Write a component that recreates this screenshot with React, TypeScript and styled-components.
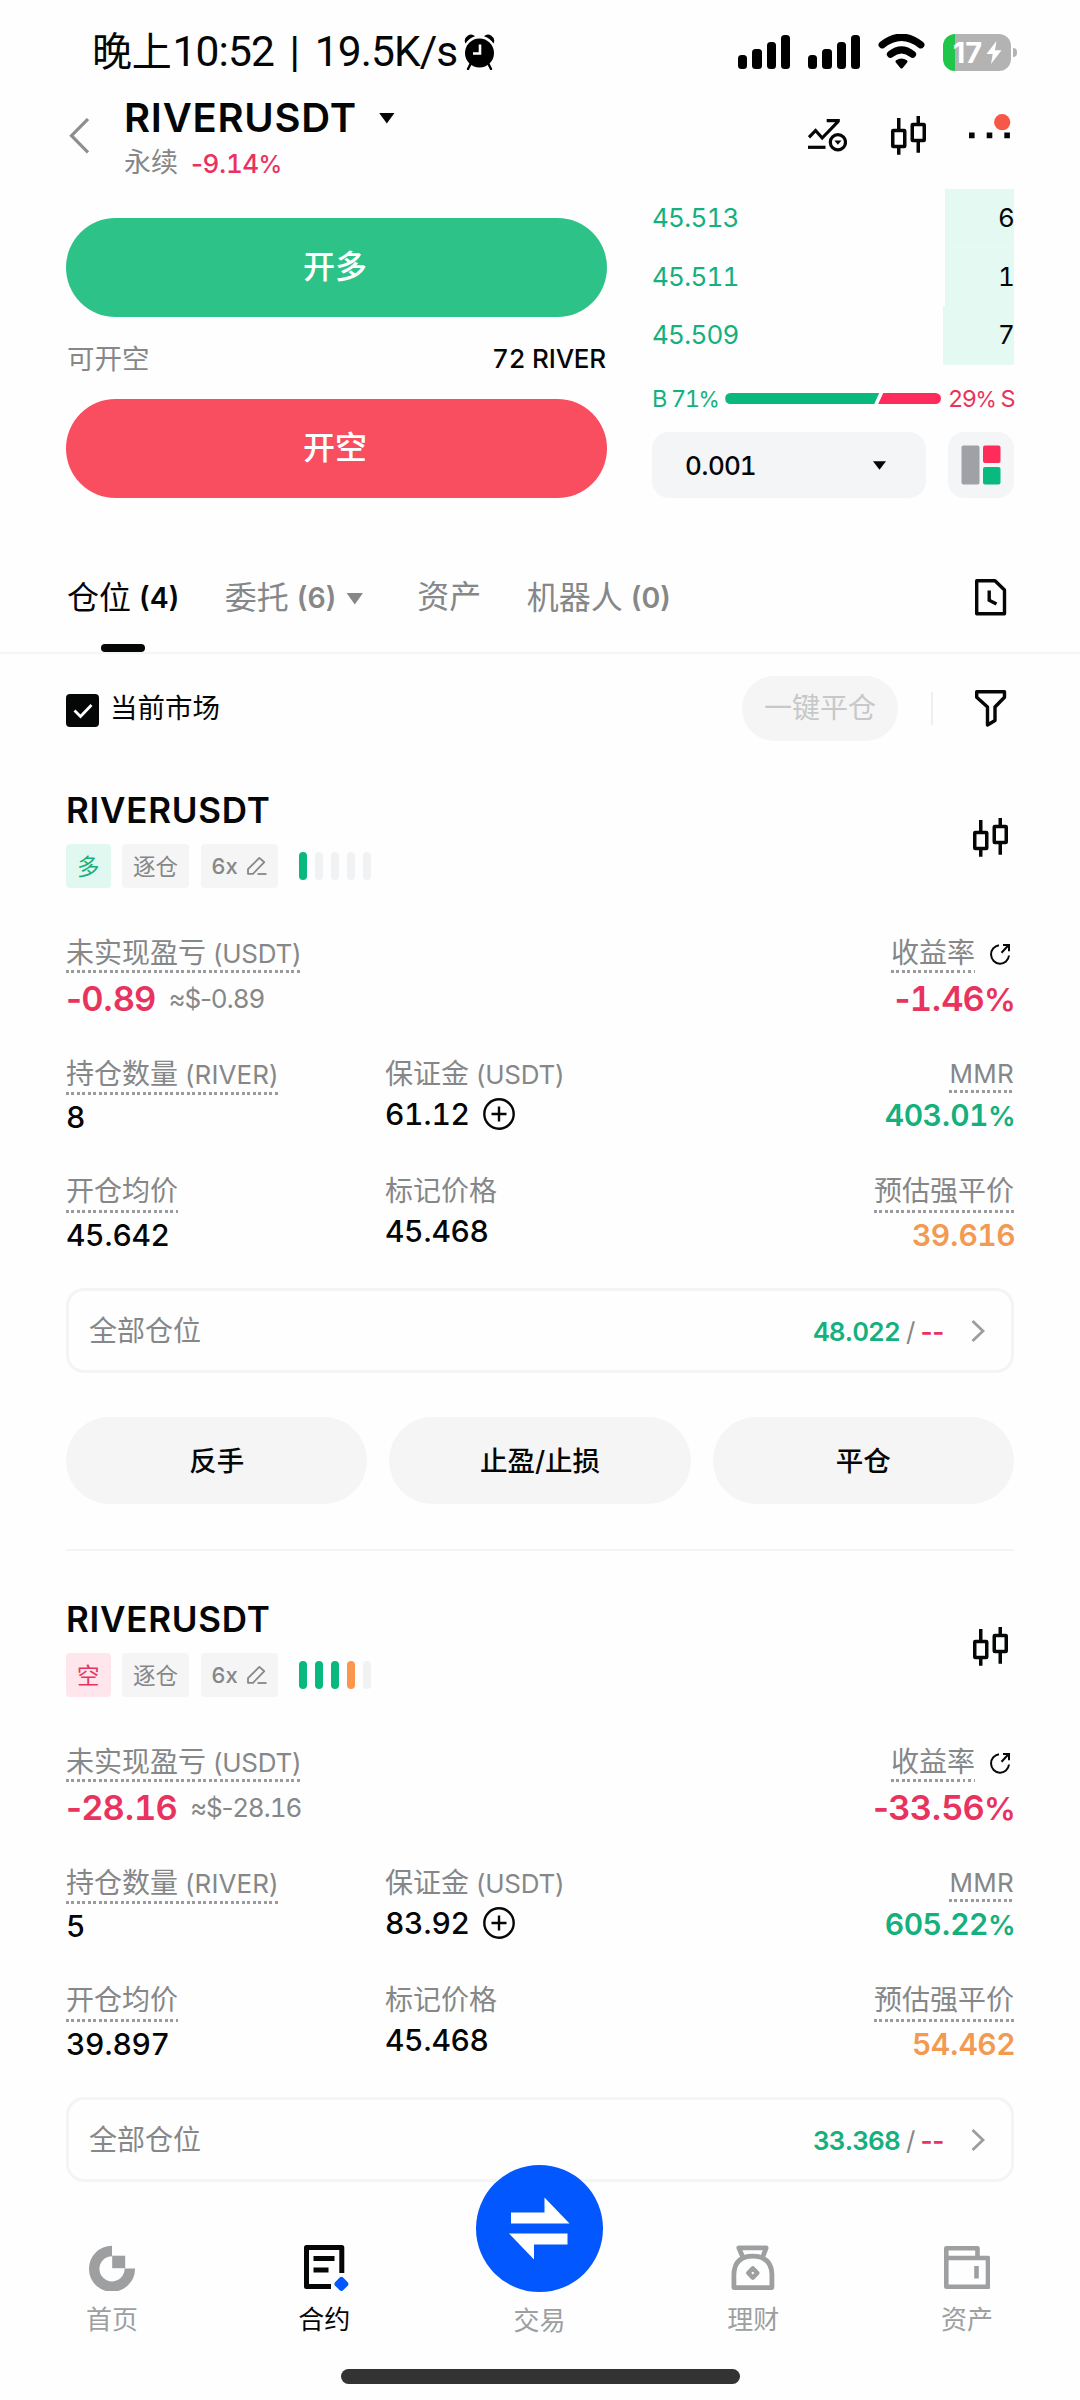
import React from "react";
import styled, { createGlobalStyle } from "styled-components";

const color = {
  ink: "#050606",
  grey: "#858788",
  soft: "#9d9fa0",
  green: "#14b07d",
  red: "#e9335f",
  orange: "#f39a52",
  fill: "#f5f5f5",
  line: "#f2f3f3",
};

const GlobalStyle = createGlobalStyle`
  * { box-sizing: border-box; }
  body {
    margin: 0;
    background: #fefefe;
    color: ${color.ink};
    font-family: Inter, "Noto Sans CJK SC", sans-serif;
  }
  svg { display: block; flex: none; }
  button { font: inherit; color: inherit; border: 0; padding: 0; }
`;

const Screen = styled.div`
  width: 1080px;
  height: 2400px;
  display: flex;
  flex-direction: column;
  overflow: hidden;
  background: #fefefe;
`;

/* ---------- text helpers ---------- */

const Digits = styled.span`
  font-variant-numeric: tabular-nums;
`;

const Percent = styled.span`
  font-size: 0.92em;
`;

function Num({ children }: { children: string }) {
  return (
    <>
      {children.split(/(\d+|%)/).map((part, i) => {
        if (part === "%") return <Percent key={i}>%</Percent>;
        return /\d/.test(part) ? <Digits key={i}>{part}</Digits> : part;
      })}
    </>
  );
}

/* ---------- status bar ---------- */

const StatusBar = styled.div`
  display: flex;
  align-items: center;
  height: 94px;
  padding: 10px 63px 0 92px;
`;

const Clock = styled.div`
  font-family: Roboto, "Noto Sans CJK SC", sans-serif;
  font-size: 42.500px;
  line-height: 48px;
  font-weight: 450;
  letter-spacing: -0.900px;
  word-spacing: 6px;
  white-space: pre;
`;

const ClockPeriod = styled.span`
  font-size: 40px;
  font-weight: 400;
  letter-spacing: -0.200px;
  margin-right: 1px;
`;

const AlarmSlot = styled.div`
  margin-left: 7px;
`;

const StatusIcons = styled.div`
  display: flex;
  align-items: center;
  margin-left: auto;
`;

const Signal = styled.div`
  display: flex;
  align-items: flex-end;
  gap: 5px;
  height: 34px;
  margin-right: 18px;
`;

const SignalBar = styled.i<{ $h: number }>`
  width: 9.250px;
  height: ${(p) => p.$h}px;
  border-radius: 3.500px;
  background: #000;
`;

const Battery = styled.div`
  display: flex;
  align-items: center;
  justify-content: center;
  gap: 4px;
  width: 68px;
  height: 37px;
  margin-left: 18px;
  padding-left: 1px;
  border-radius: 12px;
  background: linear-gradient(90deg, #1fc64a 12.5px, #b3b3b3 12.5px);
  color: #fff;
  font-size: 29px;
  line-height: 37px;
  font-weight: 700;
`;

const BatteryCap = styled.i`
  width: 4px;
  height: 9px;
  margin-left: 2px;
  border-radius: 0 4px 4px 0;
  background: #b3b3b3;
`;

const SIGNAL = [14, 20.5, 27, 34];

function SignalIcon() {
  return (
    <Signal>
      {SIGNAL.map((h) => (
        <SignalBar key={h} $h={h} />
      ))}
    </Signal>
  );
}

function AlarmIcon() {
  return (
    <svg width="31" height="36" viewBox="0 0 31 36">
      <path d="M1 8.500A6.200 6.200 0 0 1 11 2.200Q4.500 4.500 1.500 9.500ZM30 8.500A6.200 6.200 0 0 0 20 2.200Q26.500 4.500 29.500 9.500Z" fill="#000" />
      <path d="M6.500 30 4 35M24.500 30 27 35" stroke="#000" strokeWidth="2.400" strokeLinecap="round" />
      <circle cx="15.500" cy="19" r="14.500" fill="#000" />
      <path d="M16 10.500V19.500H9" fill="none" stroke="#fff" strokeWidth="2.600" />
    </svg>
  );
}

function WifiIcon() {
  return (
    <svg width="47" height="36" viewBox="0 0 47 36" fill="none" stroke="#000" strokeLinecap="round">
      <path d="M4.200 10.800Q23.500-4.300 42.800 10.800" strokeWidth="7.200" />
      <path d="M12.500 20.300Q23.500 11.500 34.500 20.300" strokeWidth="7.200" />
      <path d="M19 27.500Q23.500 24.500 28 27.500L23.500 33Z" fill="#000" strokeWidth="3" strokeLinejoin="round" />
    </svg>
  );
}

/* ---------- header ---------- */

const Header = styled.header`
  display: flex;
  align-items: flex-start;
  height: 95px;
  padding: 0 69px;
`;

const BackSlot = styled.div`
  width: 55px;
  padding-top: 24px;
`;

const TitleLine = styled.div`
  display: flex;
  align-items: center;
  gap: 22px;
  font-size: 40px;
  line-height: 48px;
  font-weight: 600;
  letter-spacing: 0.750px;
`;

const SubLine = styled.div`
  display: flex;
  gap: 13px;
  margin-top: 1px;
  font-size: 27px;
  line-height: 40px;
  color: ${color.grey};
`;

const Change = styled.span`
  padding-top: 1px;
  font-size: 26px;
  font-weight: 500;
  letter-spacing: -0.600px;
  color: ${color.red};
`;

const HeaderTools = styled.div`
  display: flex;
  margin-left: auto;
  padding-top: 22px;
  gap: 43.500px;
`;

const Caret = styled.i<{ $w: number; $h: number; $c?: string }>`
  width: ${(p) => p.$w}px;
  height: ${(p) => p.$h}px;
  background: ${(p) => p.$c ?? color.ink};
  clip-path: polygon(0 0, 100% 0, 50% 100%);
`;

function CandleIcon() {
  return (
    <svg width="35" height="39" viewBox="0 0 35 39" fill="none" stroke={color.ink} strokeWidth="3.500">
      <rect x="1.750" y="14.400" width="12" height="16.200" rx="0.600" />
      <path d="M7.750 2V14M7.750 31V38.700" />
      <rect x="21.250" y="8.400" width="12" height="16.200" rx="0.600" />
      <path d="M27.250 0V8M27.250 25V36.700" />
    </svg>
  );
}

function TrendIcon() {
  return (
    <svg width="39" height="39" viewBox="0 -3 39 39" fill="none" stroke={color.ink} strokeWidth="3.200">
      <path d="M1 18.300 7.600 11.500 14.200 19 30 2.600M18.700 1.700H31.800" />
      <path d="M0 28.300H17.500" />
      <circle cx="29.900" cy="23.300" r="7.600" />
      <path d="M26.300 21.500H33.500L29.900 25.800Z" fill={color.ink} stroke="none" />
    </svg>
  );
}

function MoreIcon() {
  return (
    <svg width="42" height="26" viewBox="0 2 42 26" overflow="visible" fill={color.ink}>
      <path d="M0 18.500h5.600v5.700H0zM17.700 18.500h5.600v5.700h-5.600zM35.300 18.500h5.600v5.700h-5.600z" />
      <circle cx="33.200" cy="8.200" r="8.100" fill="#f75747" />
    </svg>
  );
}

/* ---------- order entry ---------- */

const Trade = styled.section`
  display: grid;
  grid-template-columns: 541px 362px;
  column-gap: 45px;
  padding: 0 66px;
  height: 309px;
`;

const OrderForm = styled.div`
  display: flex;
  flex-direction: column;
  padding-top: 29px;
`;

const OrderButton = styled.button<{ $bg: string }>`
  height: 99px;
  padding: 0 3px 1px 0;
  border-radius: 50px;
  background: ${(p) => p.$bg};
  color: #fff;
  font-size: 32px;
  line-height: 40px;
  font-weight: 500;
`;

const Available = styled.div`
  display: flex;
  justify-content: space-between;
  height: 82px;
  padding: 0 1px;
  line-height: 84px;
  font-size: 27.500px;
  color: ${color.grey};
`;

const AvailableValue = styled.span`
  font-size: 26px;
  font-weight: 480;
  letter-spacing: -0.200px;
  color: ${color.ink};
`;

const Book = styled.div`
  display: flex;
  flex-direction: column;
`;

const BookRow = styled.div<{ $depth: number }>`
  display: flex;
  justify-content: space-between;
  height: 58.660px;
  line-height: 58px;
  font-size: 26px;
  letter-spacing: -0.900px;
  background: linear-gradient(#e3f9f1, #e3f9f1) right / ${(p) => p.$depth}px 100% no-repeat;
`;

const BookPrice = styled.span`
  color: ${color.green};
`;

const Ratio = styled.div`
  display: flex;
  align-items: center;
  gap: 7px;
  height: 67px;
  font-size: 23.500px;
  letter-spacing: -1.500px;
  white-space: nowrap;
`;

const RatioText = styled.span<{ $c: string }>`
  color: ${(p) => p.$c};
`;

const RatioTrack = styled.div`
  flex: 1;
  display: flex;
  height: 11px;
`;

const BuyBar = styled.i`
  flex: 71;
  border-radius: 6px 0 0 6px;
  background: #09b87e;
  clip-path: polygon(0 0, 100% 0, calc(100% - 5px) 100%, 0 100%);
`;

const SellBar = styled.i`
  flex: 29;
  margin-left: -1px;
  border-radius: 0 6px 6px 0;
  background: #fd2c5c;
  clip-path: polygon(5px 0, 100% 0, 100% 100%, 0 100%);
`;

const BookControls = styled.div`
  display: flex;
  justify-content: space-between;
  height: 66px;
`;

const StepSelect = styled.div`
  display: flex;
  align-items: center;
  justify-content: space-between;
  width: 274px;
  padding: 1px 40px 0 33px;
  border-radius: 17px;
  background: #f4f5f7;
  font-size: 26px;
  font-weight: 480;
  letter-spacing: -0.900px;
`;

const LayoutToggle = styled.div`
  display: grid;
  place-items: center;
  width: 66px;
  border-radius: 16px;
  background: #f4f5f7;
`;

/* ---------- tabs and filter ---------- */

const Tabs = styled.nav`
  display: flex;
  gap: 45.500px;
  height: 156px;
  padding: 75px 73px 0 67px;
  border-bottom: 2px solid #f5f5f5;
`;

const Tab = styled.div<{ $active?: boolean }>`
  display: flex;
  flex-direction: column;
  align-items: center;
  justify-content: space-between;
  color: ${(p) => (p.$active ? color.ink : color.grey)};
  font-weight: 400;
`;

const TabLabel = styled.div`
  display: flex;
  align-items: center;
  gap: 8px;
  font-size: 32px;
  line-height: 48px;
`;

const TabCount = styled.span`
  padding-top: 1px;
  font-size: 28.500px;
  font-weight: 600;
`;

const TabCaret = styled(Caret)`
  margin: 2px 8.500px 0 2px;
`;

const TabMark = styled.i`
  width: 44px;
  height: 8px;
  border-radius: 4px;
  background: ${color.ink};
`;

const HistorySlot = styled.div`
  margin-left: auto;
  padding-top: 6px;
`;

const FilterBar = styled.div`
  display: flex;
  align-items: center;
  height: 108px;
  padding: 0 73px 0 66px;
`;

const Checkbox = styled.div`
  display: grid;
  place-items: center;
  width: 33px;
  height: 33px;
  margin: 5px 11px 0 0;
  border-radius: 4px;
  background: ${color.ink};
`;

const CheckLabel = styled.span`
  font-size: 27.500px;
  line-height: 40px;
`;

const CloseAll = styled.button`
  height: 65px;
  margin-left: auto;
  width: 156px;
  border-radius: 33px;
  background: ${color.fill};
  color: #c6c8ca;
  font-size: 28px;
  line-height: 40px;
`;

const Separator = styled.i`
  width: 2px;
  height: 33px;
  margin: 0 42px 0 33px;
  background: #efefef;
`;

/* ---------- position card ---------- */

const Card = styled.article<{ $last?: boolean }>`
  display: flex;
  flex-direction: column;
  margin: 0 66px 20px;
  padding: 24px 0 45px;
  border-bottom: ${(p) => (p.$last ? 0 : 2)}px solid ${color.line};
`;

const CardHead = styled.div`
  display: flex;
  align-items: center;
  justify-content: space-between;
  padding-right: 6px;
  margin-bottom: 47px;
`;

const Symbol = styled.h2`
  margin: 0 0 10px;
  font-size: 35px;
  line-height: 48px;
  font-weight: 600;
  letter-spacing: 0.750px;
`;

const Tags = styled.div`
  display: flex;
  align-items: center;
`;

const Tag = styled.span<{ $c?: string; $bg?: string }>`
  display: flex;
  align-items: center;
  gap: 9px;
  height: 44px;
  margin-right: 11.500px;
  padding: 0 11px;
  border-radius: 4px;
  background: ${(p) => p.$bg ?? color.fill};
  color: ${(p) => p.$c ?? color.grey};
  font-size: 22.500px;
  line-height: 43px;
`;

const Leverage = styled.span`
  font-size: 22px;
  font-weight: 500;
`;

const Meter = styled.div`
  display: flex;
  gap: 8px;
  margin-left: 9.500px;
`;

const MeterBar = styled.i<{ $c: string }>`
  width: 8px;
  height: 28px;
  border-radius: 4px;
  background: ${(p) => p.$c};
`;

const MetricRow = styled.div<{ $h: number }>`
  display: grid;
  grid-template-columns: 319px 319px 1fr;
  height: ${(p) => p.$h}px;
`;

const WideMetricRow = styled(MetricRow)`
  grid-template-columns: 1fr auto;
`;

const Metric = styled.div<{ $end?: boolean; $top?: number }>`
  display: flex;
  flex-direction: column;
  align-items: ${(p) => (p.$end ? "flex-end" : "flex-start")};
  padding-top: ${(p) => p.$top ?? 0}px;
`;

const Label = styled.div<{ $rule?: number }>`
  height: ${(p) => p.$rule ?? 36}px;
  font-size: 28px;
  line-height: 36px;
  color: ${color.grey};
  white-space: nowrap;
  background: ${(p) =>
    p.$rule
      ? "repeating-linear-gradient(90deg, #999b9c 0 2.7px, transparent 2.7px 5.5px) bottom / 100% 3px no-repeat"
      : "none"};
`;

const LabelRow = styled.div`
  display: flex;
  gap: 15px;
  padding-right: 4px;
`;

const ShareSlot = styled.div`
  padding-top: 8px;
`;

const Unit = styled.span<{ $track?: number }>`
  margin-left: 7px;
  font-size: 26px;
  letter-spacing: ${(p) => p.$track ?? -0.25}px;
`;

const BareUnit = styled.span`
  font-size: 26px;
  letter-spacing: 0.300px;
`;

const Value = styled.div<{ $c?: string; $bold?: boolean; $gap?: number }>`
  display: flex;
  align-items: center;
  gap: 14px;
  margin-top: ${(p) => p.$gap ?? 4}px;
  margin-right: ${(p) => (p.$bold ? -1 : 0)}px;
  font-size: 30px;
  line-height: 36px;
  font-weight: ${(p) => (p.$bold ? 560 : 500)};
  letter-spacing: ${(p) => (p.$bold ? -0.6 : -0.5)}px;
  color: ${(p) => p.$c ?? color.ink};
  white-space: nowrap;
`;

const BigValue = styled(Value)`
  gap: 13px;
  font-size: 34.500px;
  line-height: 40px;
  font-weight: 600;
  letter-spacing: -0.900px;
`;

const Approx = styled.span`
  font-size: 26px;
  font-weight: 400;
  letter-spacing: -1.200px;
  color: ${color.grey};
`;

const AllBox = styled.div`
  display: flex;
  align-items: center;
  height: 85px;
  padding: 0 26px 0 20px;
  border: 3px solid #f3f4f4;
  border-radius: 18px;
  font-size: 28px;
  line-height: 40px;
  color: ${color.grey};
`;

const Limits = styled.div`
  display: flex;
  gap: 6px;
  margin-left: auto;
  padding-top: 2px;
  font-size: 26px;
  font-weight: 580;
  letter-spacing: -0.900px;
`;

const Slash = styled.span`
  font-weight: 400;
`;

const Tint = styled.span<{ $c: string }>`
  color: ${(p) => p.$c};
`;

const Dashes = styled(Tint)`
  letter-spacing: -0.300px;
`;

const ChevronSlot = styled.div`
  margin-left: 27px;
`;

const Actions = styled.div`
  display: grid;
  grid-template-columns: repeat(3, 1fr);
  gap: 22px;
  margin-top: 44px;
`;

const ActionButton = styled.button`
  height: 87px;
  border-radius: 44px;
  background: ${color.fill};
  font-size: 27.500px;
  line-height: 40px;
  font-weight: 500;
`;

function PencilIcon() {
  return (
    <svg width="20" height="20" viewBox="0 0 20 20" fill="none" stroke={color.grey} strokeWidth="1.800">
      <path d="M1 17.800V13.200L12.300 1.900 17.300 6.200 6 17.800Z" strokeLinejoin="round" />
      <path d="M10.500 18H19.500" />
    </svg>
  );
}

function ShareIcon() {
  return (
    <svg width="20" height="22" viewBox="0 0 20 22" fill="none" stroke={color.ink} strokeWidth="2">
      <path d="M9 2.200A9 9.300 0 1 0 19 12.500" />
      <path d="M11.500 9.700 18.500 2.200M13 2H19V8.300" />
    </svg>
  );
}

function PlusIcon() {
  return (
    <svg width="32" height="32" viewBox="0 0 32 32" fill="none" stroke={color.ink} strokeWidth="2.400">
      <circle cx="16" cy="16" r="14.700" />
      <path d="M16 8.500V23.500M8.500 16H23.500" />
    </svg>
  );
}

type Position = {
  side: string;
  sideColor: string;
  sideFill: string;
  meter: string[];
  pnl: string;
  roi: string;
  size: string;
  margin: string;
  mmr: string;
  entry: string;
  mark: string;
  liq: string;
  takeProfit: string;
  actions: string[];
};

const G = "#09b87e";
const O = "#fb964f";
const E = "#f1f2f3";

const POSITIONS: Position[] = [
  {
    side: "多", sideColor: color.green, sideFill: "#e1f8f0", meter: [G, E, E, E, E],
    pnl: "-0.89", roi: "-1.46%", size: "8", margin: "61.12", mmr: "403.01%",
    entry: "45.642", mark: "45.468", liq: "39.616", takeProfit: "48.022",
    actions: ["反手", "止盈/止损", "平仓"],
  },
  {
    side: "空", sideColor: color.red, sideFill: "#fee6ec", meter: [G, G, G, O, E],
    pnl: "-28.16", roi: "-33.56%", size: "5", margin: "83.92", mmr: "605.22%",
    entry: "39.897", mark: "45.468", liq: "54.462", takeProfit: "33.368",
    actions: [],
  },
];

function PositionCard({ p, last }: { p: Position; last: boolean }) {
  return (
    <Card $last={last}>
      <CardHead>
        <div>
          <Symbol>RIVERUSDT</Symbol>
          <Tags>
            <Tag $c={p.sideColor} $bg={p.sideFill}>{p.side}</Tag>
            <Tag>逐仓</Tag>
            <Tag>
              <Leverage>6x</Leverage>
              <PencilIcon />
            </Tag>
            <Meter>
              {p.meter.map((c, i) => (
                <MeterBar key={i} $c={c} />
              ))}
            </Meter>
          </Tags>
        </div>
        <CandleIcon />
      </CardHead>

      <WideMetricRow $h={120}>
        <Metric>
          <Label $rule={38}>未实现盈亏<Unit>(USDT)</Unit></Label>
          <BigValue $c={color.red} $gap={5.5}>
            <span><Num>{p.pnl}</Num></span>
            <Approx><Num>{`≈$${p.pnl}`}</Num></Approx>
          </BigValue>
        </Metric>
        <Metric $end>
          <LabelRow>
            <Label $rule={38}>收益率</Label>
            <ShareSlot><ShareIcon /></ShareSlot>
          </LabelRow>
          <BigValue $c={color.red} $bold $gap={5.5}>
            <span><Num>{p.roi}</Num></span>
          </BigValue>
        </Metric>
      </WideMetricRow>

      <MetricRow $h={118}>
        <Metric $top={1}>
          <Label $rule={39}>持仓数量<Unit $track={0.1}>(RIVER)</Unit></Label>
          <Value><span><Num>{p.size}</Num></span></Value>
        </Metric>
        <Metric $top={1}>
          <Label>保证金<Unit>(USDT)</Unit></Label>
          <Value><span><Num>{p.margin}</Num></span><PlusIcon /></Value>
        </Metric>
        <Metric $end>
          <Label $rule={38}><BareUnit>MMR</BareUnit></Label>
          <Value $c={color.green} $bold><span><Num>{p.mmr}</Num></span></Value>
        </Metric>
      </MetricRow>

      <MetricRow $h={115}>
        <Metric>
          <Label $rule={40}>开仓均价</Label>
          <Value><span><Num>{p.entry}</Num></span></Value>
        </Metric>
        <Metric>
          <Label>标记价格</Label>
          <Value><span><Num>{p.mark}</Num></span></Value>
        </Metric>
        <Metric $end>
          <Label $rule={40}>预估强平价</Label>
          <Value $c={color.orange} $bold><span><Num>{p.liq}</Num></span></Value>
        </Metric>
      </MetricRow>

      <AllBox>
        全部仓位
        <Limits>
          <Tint $c={color.green}><Num>{p.takeProfit}</Num></Tint>
          <Slash>/</Slash>
          <Dashes $c={color.red}>--</Dashes>
        </Limits>
        <ChevronSlot>
          <svg width="14" height="22" viewBox="0 0 14 22" fill="none" stroke="#9b9d9e" strokeWidth="2.800">
            <path d="M1.500 1 12 11 1.500 21" />
          </svg>
        </ChevronSlot>
      </AllBox>

      {p.actions.length > 0 && (
        <Actions>
          {p.actions.map((a) => (
            <ActionButton key={a}>{a}</ActionButton>
          ))}
        </Actions>
      )}
    </Card>
  );
}

/* ---------- bottom navigation ---------- */

const Positions = styled.main`
  flex: 1;
  min-height: 0;
`;

const BottomNav = styled.nav`
  position: relative;
  display: grid;
  grid-template-columns: repeat(5, 1fr);
  height: 179px;
  padding: 0 6px 0 5px;
`;

const NavItem = styled.div<{ $active?: boolean }>`
  display: flex;
  flex-direction: column;
  align-items: center;
  padding-top: 55px;
  color: ${(p) => (p.$active ? color.ink : color.soft)};
`;

const NavLabel = styled.span<{ $shift?: number }>`
  margin-top: 10px;
  margin-right: ${(p) => p.$shift ?? 0}px;
  font-size: 26px;
  line-height: 38px;
`;

const TradeFab = styled.div`
  display: grid;
  place-items: center;
  width: 127px;
  height: 127px;
  margin-top: -80px;
  border-radius: 50%;
  background: #0257fe;
`;

const HomeIndicator = styled.div`
  width: 399px;
  height: 15px;
  margin: 0 auto 16px;
  flex: none;
  border-radius: 8px;
  background: #333;
`;

function HomeIcon() {
  return (
    <svg width="46" height="46" viewBox="0 0 46 46">
      <path d="M23 6A17.800 17.800 0 1 0 40.800 23.500" fill="none" stroke={color.soft} strokeWidth="10.400" />
      <path d="M23.200 10.700H36.200V23.200H23.200Z" fill={color.soft} />
    </svg>
  );
}

function ContractIcon() {
  return (
    <svg width="46" height="46" viewBox="0 0 46 46" fill="none" stroke={color.ink} strokeWidth="5">
      <path d="M28 41.500H3.500V2.500H38.800V28" strokeLinejoin="round" />
      <path d="M10.500 13.500H31.500M10.500 25H25.500" />
      <rect x="32.700" y="33.200" width="11.400" height="11.400" rx="2.800" transform="rotate(45 38.400 38.900)" fill="#0257fe" stroke="none" />
    </svg>
  );
}

function EarnIcon() {
  return (
    <svg width="46" height="46" viewBox="0 0 46 46" fill="none" stroke={color.soft} strokeWidth="4.800" strokeLinejoin="round">
      <path d="M13 12.500 8.800 2.900H36.200L32.500 12.500" />
      <path d="M3.900 42.600V29.500Q4.500 11.300 22.800 11.200 41.300 11.300 41.900 29.500V42.600Z" />
      <path d="M22.800 23.400 27.400 28 22.800 32.600 18.200 28Z" strokeWidth="4.400" />
    </svg>
  );
}

function WalletIcon() {
  return (
    <svg width="46" height="46" viewBox="0 0 46 46" fill="none" stroke={color.soft} strokeWidth="4.600" strokeLinejoin="round">
      <path d="M2.300 13V3.300H33.500V13" />
      <path d="M2.300 13H44V41.800H2.300Z" />
      <path d="M32.500 21V33.500" strokeLinejoin="miter" />
    </svg>
  );
}

export default function App() {
  return (
    <>
      <GlobalStyle />
      <Screen>
        <StatusBar>
          <Clock>
            <ClockPeriod>晚上</ClockPeriod>10:52 | 19.5K/s
          </Clock>
          <AlarmSlot><AlarmIcon /></AlarmSlot>
          <StatusIcons>
            <SignalIcon />
            <SignalIcon />
            <WifiIcon />
            <Battery>
              17
              <svg width="16" height="23" viewBox="0 0 16 23" fill="#fff">
                <path d="M10.500 0 0.500 13H6.700L5 23 15.500 9.300H9Z" />
              </svg>
            </Battery>
            <BatteryCap />
          </StatusIcons>
        </StatusBar>

        <Header>
          <BackSlot>
            <svg width="20" height="36" viewBox="0 0 20 36" fill="none" stroke="#8c8e8f" strokeWidth="3.200">
              <path d="M19 1 2.500 17.700 19 34.500" />
            </svg>
          </BackSlot>
          <div>
            <TitleLine>
              RIVERUSDT
              <Caret $w={16} $h={11} />
            </TitleLine>
            <SubLine>
              永续
              <Change><Num>-9.14%</Num></Change>
            </SubLine>
          </div>
          <HeaderTools>
            <TrendIcon />
            <CandleIcon />
            <MoreIcon />
          </HeaderTools>
        </Header>

        <Trade>
          <OrderForm>
            <OrderButton $bg="#2dc388">开多</OrderButton>
            <Available>
              可开空
              <AvailableValue><Num>72 RIVER</Num></AvailableValue>
            </Available>
            <OrderButton $bg="#f84e60">开空</OrderButton>
          </OrderForm>
          <Book>
            <BookRow $depth={69}><BookPrice><Num>45.513</Num></BookPrice><Num>6</Num></BookRow>
            <BookRow $depth={69}><BookPrice><Num>45.511</Num></BookPrice><Num>1</Num></BookRow>
            <BookRow $depth={71}><BookPrice><Num>45.509</Num></BookPrice><Num>7</Num></BookRow>
            <Ratio>
              <RatioText $c={color.green}><Num>B 71%</Num></RatioText>
              <RatioTrack><BuyBar /><SellBar /></RatioTrack>
              <RatioText $c={color.red}><Num>29% S</Num></RatioText>
            </Ratio>
            <BookControls>
              <StepSelect>
                <span><Num>0.001</Num></span>
                <Caret $w={13} $h={8.5} />
              </StepSelect>
              <LayoutToggle>
                <svg width="40" height="40" viewBox="0 0 40 40">
                  <rect x="0.500" y="0.500" width="18" height="39" rx="2" fill="#a0a1a7" />
                  <rect x="22" y="0.500" width="17.500" height="17.500" rx="2" fill="#ff2b5a" />
                  <rect x="22" y="22" width="17.500" height="17.500" rx="2" fill="#09ba7e" />
                </svg>
              </LayoutToggle>
            </BookControls>
          </Book>
        </Trade>

        <Tabs>
          <Tab $active>
            <TabLabel>仓位<TabCount>(4)</TabCount></TabLabel>
            <TabMark />
          </Tab>
          <Tab>
            <TabLabel>
              委托<TabCount>(6)</TabCount>
              <TabCaret $w={17} $h={12} $c={color.grey} />
            </TabLabel>
          </Tab>
          <Tab><TabLabel>资产</TabLabel></Tab>
          <Tab><TabLabel>机器人<TabCount>(0)</TabCount></TabLabel></Tab>
          <HistorySlot>
            <svg width="32" height="37" viewBox="0 0 32 37" fill="none" stroke={color.ink} strokeWidth="3.400">
              <path d="M1.700 1.700H20L29.500 11V34.800H1.700Z" strokeLinejoin="round" />
              <path d="M14.200 11.500V21.300L21.500 25" />
            </svg>
          </HistorySlot>
        </Tabs>

        <FilterBar>
          <Checkbox>
            <svg width="20" height="16" viewBox="0 0 20 16" fill="none" stroke="#fff" strokeWidth="2.800">
              <path d="M1.500 7.500 7.500 13.500 18.500 2" />
            </svg>
          </Checkbox>
          <CheckLabel>当前市场</CheckLabel>
          <CloseAll>一键平仓</CloseAll>
          <Separator />
          <svg width="32" height="37" viewBox="0 0 32 37" fill="none" stroke={color.ink} strokeWidth="3.400">
            <path d="M1.700 1.700H29.500V7.200L20 17V30.500L12.500 35V17L1.700 7.200Z" strokeLinejoin="round" />
          </svg>
        </FilterBar>

        <Positions>
          {POSITIONS.map((p, i) => (
            <PositionCard key={p.side} p={p} last={i === POSITIONS.length - 1} />
          ))}
        </Positions>

        <BottomNav>
          <NavItem><HomeIcon /><NavLabel>首页</NavLabel></NavItem>
          <NavItem $active><ContractIcon /><NavLabel $shift={3}>合约</NavLabel></NavItem>
          <NavItem>
            <TradeFab>
              <svg width="61" height="63" viewBox="0 0 61 63" fill="#fff">
                <path d="M2 15.500H35.500V0.500L60.500 26.500H2Z" />
                <path d="M58.500 47.500H25V62.500L0 36.500H58.500Z" />
              </svg>
            </TradeFab>
            <NavLabel>交易</NavLabel>
          </NavItem>
          <NavItem><EarnIcon /><NavLabel>理财</NavLabel></NavItem>
          <NavItem><WalletIcon /><NavLabel>资产</NavLabel></NavItem>
        </BottomNav>
        <HomeIndicator />
      </Screen>
    </>
  );
}
